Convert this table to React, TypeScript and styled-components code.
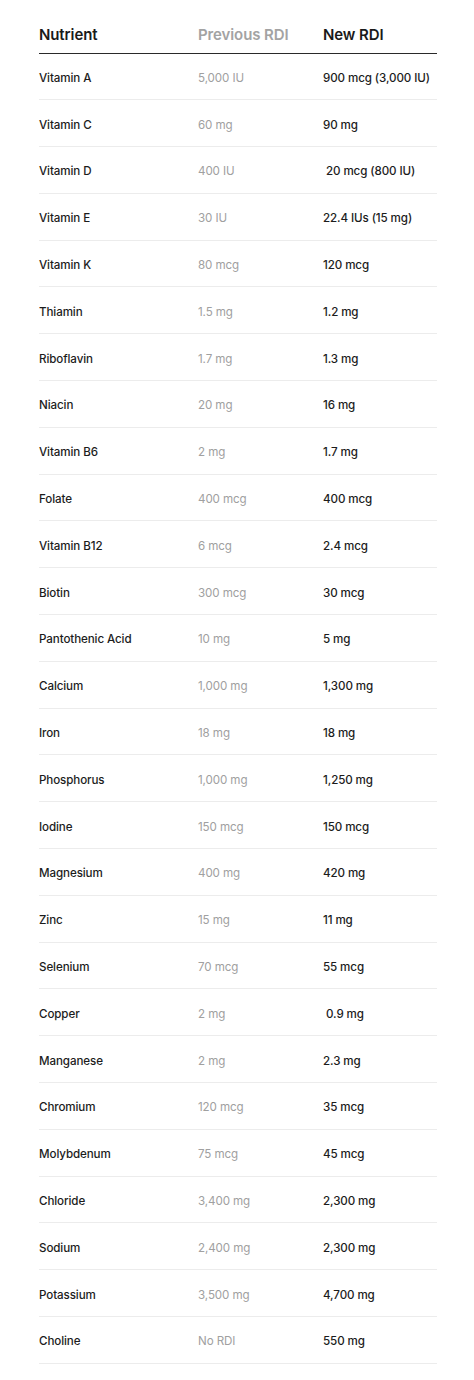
import React from 'react'
import styled, { createGlobalStyle } from 'styled-components'

const GlobalStyle = createGlobalStyle`
  body {
    margin: 0;
    background: #ffffff;
    font-family: Inter, 'Noto Sans', sans-serif;
    -webkit-font-smoothing: antialiased;
  }
`

interface Row {
  name: string
  previous: string
  next: string
}

const rows: Row[] = [
  { name: 'Vitamin A', previous: '5,000 IU', next: '900 mcg (3,000 IU)' },
  { name: 'Vitamin C', previous: '60 mg', next: '90 mg' },
  { name: 'Vitamin D', previous: '400 IU', next: '\u00a020 mcg (800 IU)' },
  { name: 'Vitamin E', previous: '30 IU', next: '22.4 IUs (15 mg)' },
  { name: 'Vitamin K', previous: '80 mcg', next: '120 mcg' },
  { name: 'Thiamin', previous: '1.5 mg', next: '1.2 mg' },
  { name: 'Riboflavin', previous: '1.7 mg', next: '1.3 mg' },
  { name: 'Niacin', previous: '20 mg', next: '16 mg' },
  { name: 'Vitamin B6', previous: '2 mg', next: '1.7 mg' },
  { name: 'Folate', previous: '400 mcg', next: '400 mcg' },
  { name: 'Vitamin B12', previous: '6 mcg', next: '2.4 mcg' },
  { name: 'Biotin', previous: '300 mcg', next: '30 mcg' },
  { name: 'Pantothenic Acid', previous: '10 mg', next: '5 mg' },
  { name: 'Calcium', previous: '1,000 mg', next: '1,300 mg' },
  { name: 'Iron', previous: '18 mg', next: '18 mg' },
  { name: 'Phosphorus', previous: '1,000 mg', next: '1,250 mg' },
  { name: 'Iodine', previous: '150 mcg', next: '150 mcg' },
  { name: 'Magnesium', previous: '400 mg', next: '420 mg' },
  { name: 'Zinc', previous: '15 mg', next: '11 mg' },
  { name: 'Selenium', previous: '70 mcg', next: '55 mcg' },
  { name: 'Copper', previous: '2 mg', next: '\u00a00.9 mg' },
  { name: 'Manganese', previous: '2 mg', next: '2.3 mg' },
  { name: 'Chromium', previous: '120 mcg', next: '35 mcg' },
  { name: 'Molybdenum', previous: '75 mcg', next: '45 mcg' },
  { name: 'Chloride', previous: '3,400 mg', next: '2,300 mg' },
  { name: 'Sodium', previous: '2,400 mg', next: '2,300 mg' },
  { name: 'Potassium', previous: '3,500 mg', next: '4,700 mg' },
  { name: 'Choline', previous: 'No RDI', next: '550 mg' },
]

const Table = styled.div`
  width: 398px;
  margin-left: 39px;
  padding-top: 15px;
`

const HeaderRow = styled.div`
  display: grid;
  grid-template-columns: 159px 125px 1fr;
  align-items: center;
  height: 38.5px;
  box-sizing: border-box;
  padding-top: 1px;
  border-bottom: 1.5px solid #2a2a2a;
`

const HeadCell = styled.div<{ muted?: boolean }>`
  font-size: 15px;
  font-weight: 600;
  letter-spacing: -0.1px;
  color: ${(props) => (props.muted ? '#a3a3a3' : '#1a1a1a')};
`

const BodyRow = styled.div`
  display: grid;
  grid-template-columns: 159px 125px 1fr;
  align-items: center;
  height: 46.8px;
  box-sizing: border-box;
  padding-top: 3px;
  border-bottom: 1px solid #ececec;
`

const Cell = styled.div<{ muted?: boolean }>`
  font-size: 11.6px;
  font-weight: ${(props) => (props.muted ? 400 : 500)};
  letter-spacing: -0.1px;
  color: ${(props) => (props.muted ? '#a0a0a0' : '#1c1c1c')};
  white-space: pre;
`

const App = () => {
  return (
    <>
      <GlobalStyle />
      <Table>
        <HeaderRow>
          <HeadCell>Nutrient</HeadCell>
          <HeadCell muted>Previous RDI</HeadCell>
          <HeadCell>New RDI</HeadCell>
        </HeaderRow>
        {rows.map((row) => (
          <BodyRow key={row.name}>
            <Cell>{row.name}</Cell>
            <Cell muted>{row.previous}</Cell>
            <Cell>{row.next}</Cell>
          </BodyRow>
        ))}
      </Table>
    </>
  )
}

export default App
